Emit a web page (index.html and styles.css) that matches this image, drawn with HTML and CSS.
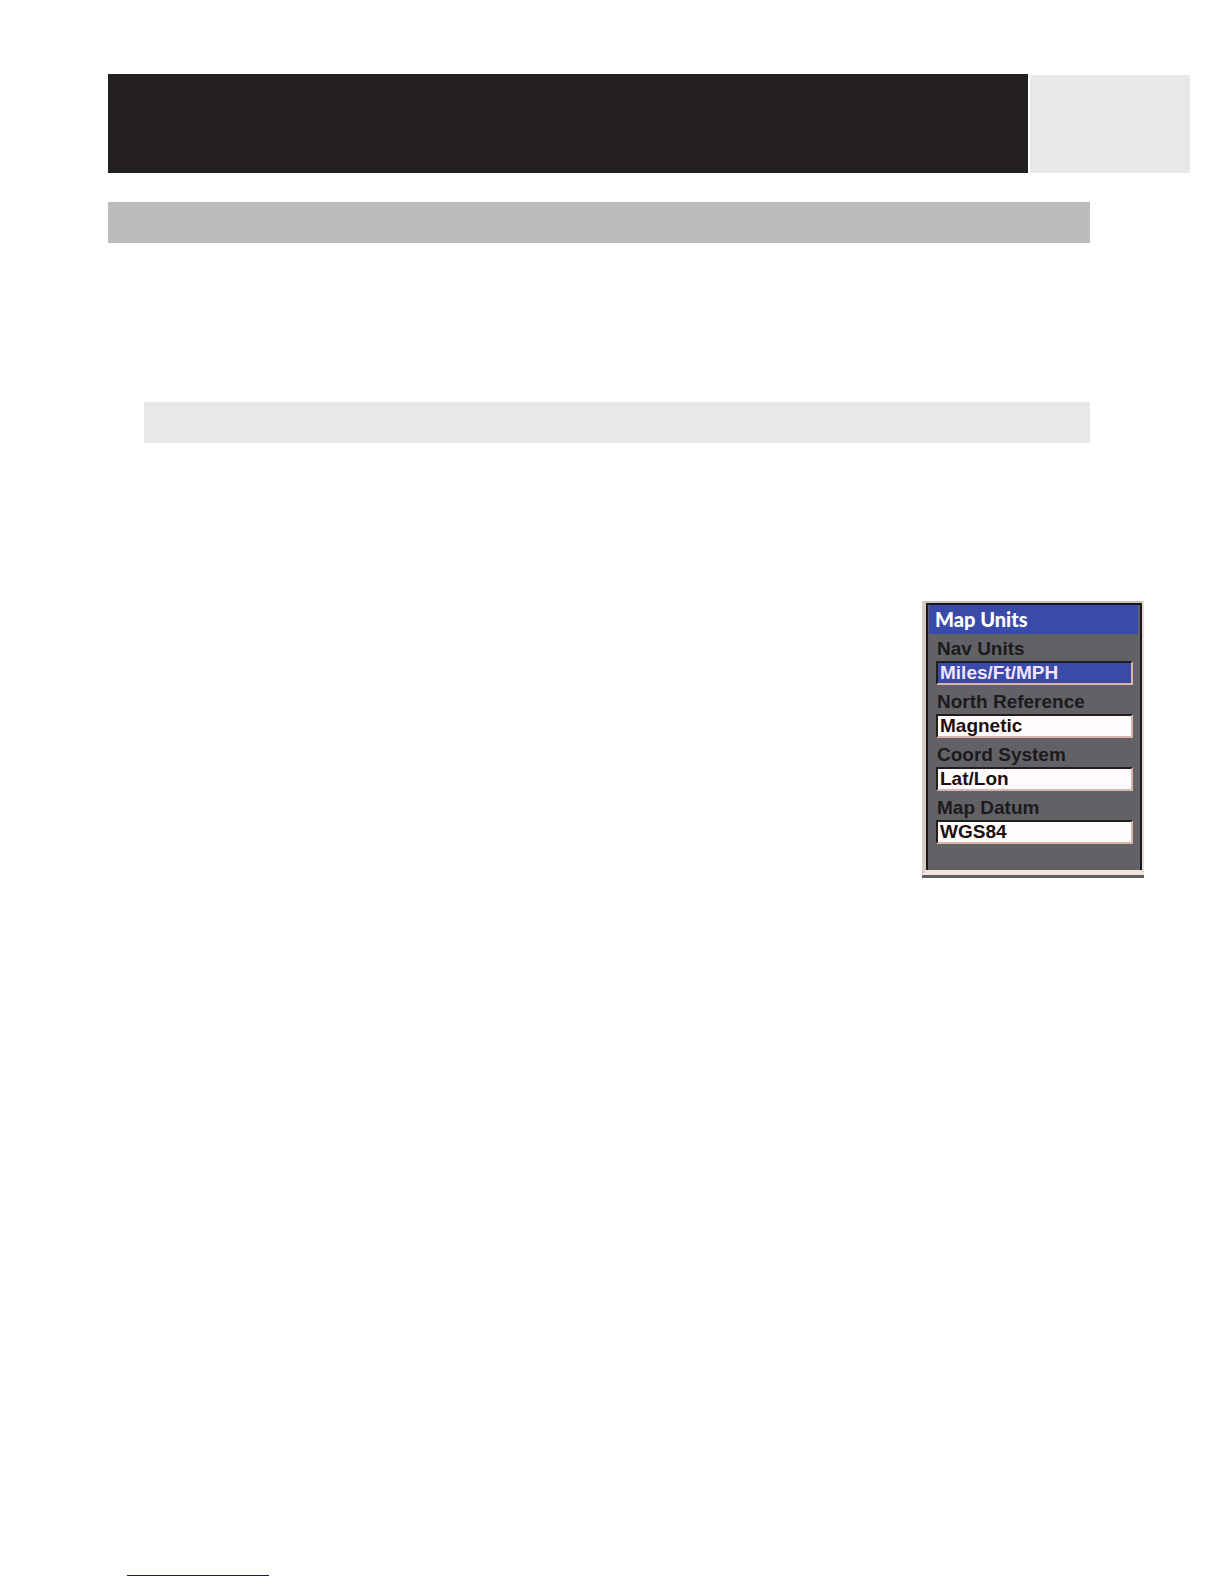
FILE: index.html
```
<!DOCTYPE html>
<html lang="en">
<head>
    <meta charset="UTF-8">
    <meta name="viewport" content="width=device-width, initial-scale=1.0">
    <title>Map Units</title>
    <link rel="stylesheet" href="styles.css">
</head>
<body>
    <header class="page-header">
        <div class="header-band"></div>
        <div class="header-tab"></div>
    </header>

    <main class="content">
        <div class="section-bar"></div>
        <div class="subsection-bar"></div>

        <form class="units-panel">
            <div class="panel-inner">
                <h1 class="panel-title">Map Units</h1>
                <div class="field">
                    <label for="nav-units">Nav Units</label>
                    <select id="nav-units" class="selected">
                        <option>Miles/Ft/MPH</option>
                    </select>
                </div>
                <div class="field">
                    <label for="north-reference">North Reference</label>
                    <select id="north-reference">
                        <option>Magnetic</option>
                    </select>
                </div>
                <div class="field">
                    <label for="coord-system">Coord System</label>
                    <select id="coord-system">
                        <option>Lat/Lon</option>
                    </select>
                </div>
                <div class="field">
                    <label for="map-datum">Map Datum</label>
                    <select id="map-datum">
                        <option>WGS84</option>
                    </select>
                </div>
            </div>
        </form>
    </main>

    <footer class="page-footer">
        <a class="footer-link" href="#"></a>
    </footer>
</body>
</html>
```

FILE: styles.css
```
* { box-sizing: border-box; }
body {
    display: flex;
    flex-direction: column;
    min-height: 100vh;
    margin: 0;
    padding: 74px 34px 8px 108px;
    background-color: #fff;
    font-family: "Liberation Sans", Arial, sans-serif;
}

/* header */
.page-header {
    display: flex;
    gap: 2px;
    height: 99px;
}
.header-band {
    flex: 1;
    background-color: #242021;
}
.header-tab {
    width: 160px;
    margin-top: 1px;
    background-color: #e8e8e8;
}

/* section headings */
.content {
    display: flex;
    flex-direction: column;
    padding-top: 29px;
}
.section-bar,
.subsection-bar {
    height: 41px;
    margin-right: 100px;
}
.section-bar { background-color: #bcbcbc; }
.subsection-bar {
    margin-top: 159px;
    margin-left: 36px;
    background-color: #e8e8e8;
}

/* map units menu */
.units-panel {
    align-self: flex-end;
    width: 222px;
    margin-top: 158px;
    margin-right: 46px;
    border: 2px solid #eadad6;
    border-top-color: #c8c4c0;
    border-left: 4px solid #d3ccc7;
    border-bottom: 5px solid #f3e4df;
    box-shadow: 0 3px 0 #5f5f62;
}
.panel-inner {
    padding: 0 2px 24px 1px;
    border: 2px solid #18181c;
    border-bottom: 0;
    background-color: #626266;
}
.panel-title {
    margin: 0;
    padding-left: 6px;
    background-color: #3a4aa8;
    color: #fff;
    font-family: Lato, "Liberation Sans", sans-serif;
    font-size: 20px;
    font-weight: 900;
    line-height: 29px;
}
.field {
    display: flex;
    flex-direction: column;
    height: 53px;
    padding: 3px 5px 0 7px;
    color: #1c1a1c;
    font-size: 19px;
    font-weight: bold;
}
.field label {
    padding-left: 1px;
    line-height: 24px;
}
.field select {
    height: 24px;
    margin: 0;
    padding: 0 0 0 2px;
    appearance: none;
    border: 2px solid #d9b5ad;
    border-top-color: #221e20;
    border-left-color: #221e20;
    border-radius: 0;
    background-color: #fffcfb;
    color: #1c0f10;
    font: inherit;
    line-height: 20px;
}
.field select.selected {
    background-color: #3a4aa8;
    color: #f3e4fb;
}

/* footer */
.page-footer { margin-top: auto; }
.footer-link {
    display: block;
    width: 142px;
    margin-left: 19px;
    border-bottom: 1px solid #17177a;
}
```
